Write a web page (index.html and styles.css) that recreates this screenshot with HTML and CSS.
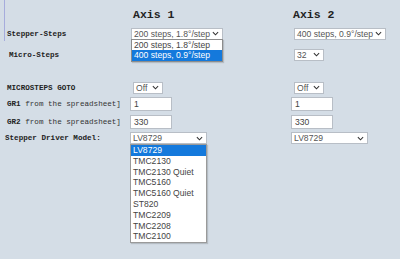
FILE: index.html
```html
<!DOCTYPE html>
<html lang="en">
<head>
    <meta charset="UTF-8">
    <title>Stepper Settings</title>
    <link rel="stylesheet" href="styles.css">
</head>
<body>
    <div class="settings">
        <div class="row row-head">
            <div class="label label-line"></div>
            <div class="cell"><h2 class="axis axis-1">Axis 1</h2></div>
            <div class="cell"><h2 class="axis axis-2">Axis 2</h2></div>
        </div>

        <div class="row row-steps">
            <div class="label label-line">Stepper-Steps</div>
            <div class="cell">
                <div class="select w-step ml-1">
                    <span>200 steps, 1.8°/step</span>
                    <svg viewBox="0 0 8 5"><path d="M1 1l3 3 3-3" fill="none" stroke="#333" stroke-width="1.2"/></svg>
                    <div class="list">
                        <div class="option">200 steps, 1.8°/step</div>
                        <div class="option selected">400 steps, 0.9°/step</div>
                    </div>
                </div>
            </div>
            <div class="cell">
                <div class="select w-step ml-3">
                    <span>400 steps, 0.9°/step</span>
                    <svg viewBox="0 0 8 5"><path d="M1 1l3 3 3-3" fill="none" stroke="#333" stroke-width="1.2"/></svg>
                </div>
            </div>
        </div>

        <div class="row row-micro">
            <div class="label pl-9">Micro-Steps</div>
            <div class="cell"></div>
            <div class="cell">
                <div class="select w-small ml-3">
                    <span>32</span>
                    <svg viewBox="0 0 8 5"><path d="M1 1l3 3 3-3" fill="none" stroke="#333" stroke-width="1.2"/></svg>
                </div>
            </div>
        </div>

        <div class="row row-goto">
            <div class="label pl-7">MICROSTEPS GOTO</div>
            <div class="cell">
                <div class="select w-small ml-3">
                    <span>Off</span>
                    <svg viewBox="0 0 8 5"><path d="M1 1l3 3 3-3" fill="none" stroke="#333" stroke-width="1.2"/></svg>
                </div>
            </div>
            <div class="cell">
                <div class="select w-small ml-3">
                    <span>Off</span>
                    <svg viewBox="0 0 8 5"><path d="M1 1l3 3 3-3" fill="none" stroke="#333" stroke-width="1.2"/></svg>
                </div>
            </div>
        </div>

        <div class="row row-gr1">
            <div class="label pl-7">GR1 <span class="light">from the spreadsheet]</span></div>
            <div class="cell"><input class="field ml-1" type="text" value="1"></div>
            <div class="cell"><input class="field" type="text" value="1"></div>
        </div>

        <div class="row row-gr2">
            <div class="label pl-7">GR2 <span class="light">from the spreadsheet]</span></div>
            <div class="cell"><input class="field ml-1" type="text" value="330"></div>
            <div class="cell"><input class="field" type="text" value="330"></div>
        </div>

        <div class="row row-driver">
            <div class="label pl-5">Stepper Driver Model:</div>
            <div class="cell">
                <div class="select w-driver">
                    <span>LV8729</span>
                    <svg viewBox="0 0 8 5"><path d="M1 1l3 3 3-3" fill="none" stroke="#333" stroke-width="1.2"/></svg>
                    <div class="list list-driver">
                        <div class="option selected">LV8729</div>
                        <div class="option">TMC2130</div>
                        <div class="option">TMC2130 Quiet</div>
                        <div class="option">TMC5160</div>
                        <div class="option">TMC5160 Quiet</div>
                        <div class="option">ST820</div>
                        <div class="option">TMC2209</div>
                        <div class="option">TMC2208</div>
                        <div class="option">TMC2100</div>
                    </div>
                </div>
            </div>
            <div class="cell">
                <div class="select w-driver">
                    <span>LV8729</span>
                    <svg viewBox="0 0 8 5"><path d="M1 1l3 3 3-3" fill="none" stroke="#333" stroke-width="1.2"/></svg>
                </div>
            </div>
        </div>
    </div>
</body>
</html>
```

FILE: styles.css
```css
body {
    margin: 0;
    background: #d4dde6;
    font-family: 'Liberation Mono', monospace;
    color: #222;
}
.settings {
    width: 400px;
    height: 259px;
}
.row {
    display: grid;
    grid-template-columns: 130px 161px 1fr;
    align-items: center;
    height: 15px;
}
.row-head {
    height: 26px;
    align-items: stretch;
}
.row-micro { margin-top: 6px; }
.row-goto { margin-top: 18px; }
.row-gr1 { margin-top: 1px; height: 16px; }
.row-gr2 { margin-top: 2px; height: 16px; }
.row-driver { margin-top: 1px; height: 14px; }
.cell {
    display: flex;
    align-items: center;
}
.axis {
    margin: 4px 0 0;
    font-size: 11.5px;
    line-height: 12px;
    font-weight: bold;
}
.axis-1 { margin-left: 3px; }
.axis-2 { margin-left: 2px; }
.label {
    font-size: 7.6px;
    font-weight: bold;
    white-space: nowrap;
}
.label .light {
    font-weight: normal;
    color: #333;
}
.label-line {
    margin-left: 4px;
    border-left: 1px solid #a6acdc;
    padding-left: 2px;
    align-self: stretch;
    display: flex;
    align-items: center;
}
.pl-5 { padding-left: 5px; }
.pl-7 { padding-left: 7px; }
.pl-9 { padding-left: 9px; }
.ml-1 { margin-left: 1px; }
.ml-3 { margin-left: 3px; }
.select {
    position: relative;
    display: flex;
    align-items: center;
    justify-content: space-between;
    box-sizing: border-box;
    height: 12px;
    padding: 0 3px 0 2px;
    background: #fff;
    border: 1px solid #b8bec6;
    font-family: 'Liberation Sans', Arial, sans-serif;
    font-size: 8.6px;
    color: #555;
    white-space: nowrap;
}
.select svg {
    width: 7px;
    height: 5px;
    flex: none;
}
.w-step { width: 92px; }
.w-small { width: 30px; }
.w-driver { width: 77px; }
.field {
    box-sizing: border-box;
    width: 42px;
    height: 14px;
    margin: 0;
    padding: 0 3px;
    background: #fff;
    border: 1px solid #b8bec6;
    font-family: 'Liberation Sans', Arial, sans-serif;
    font-size: 8.6px;
    color: #444;
    outline: none;
}
.list {
    position: absolute;
    top: 100%;
    left: -1px;
    right: -1px;
    z-index: 10;
    background: #fff;
    border: 1px solid #8c8c8c;
    box-shadow: 1px 1px 1px rgba(0, 0, 0, 0.15);
}
.list-driver {
    top: 11px;
    border-color: #9a9a9a;
}
.option {
    height: 10.8px;
    line-height: 10.8px;
    padding-left: 2px;
    color: #444;
}
.option.selected {
    background: #1479dc;
    color: #fff;
}
```
